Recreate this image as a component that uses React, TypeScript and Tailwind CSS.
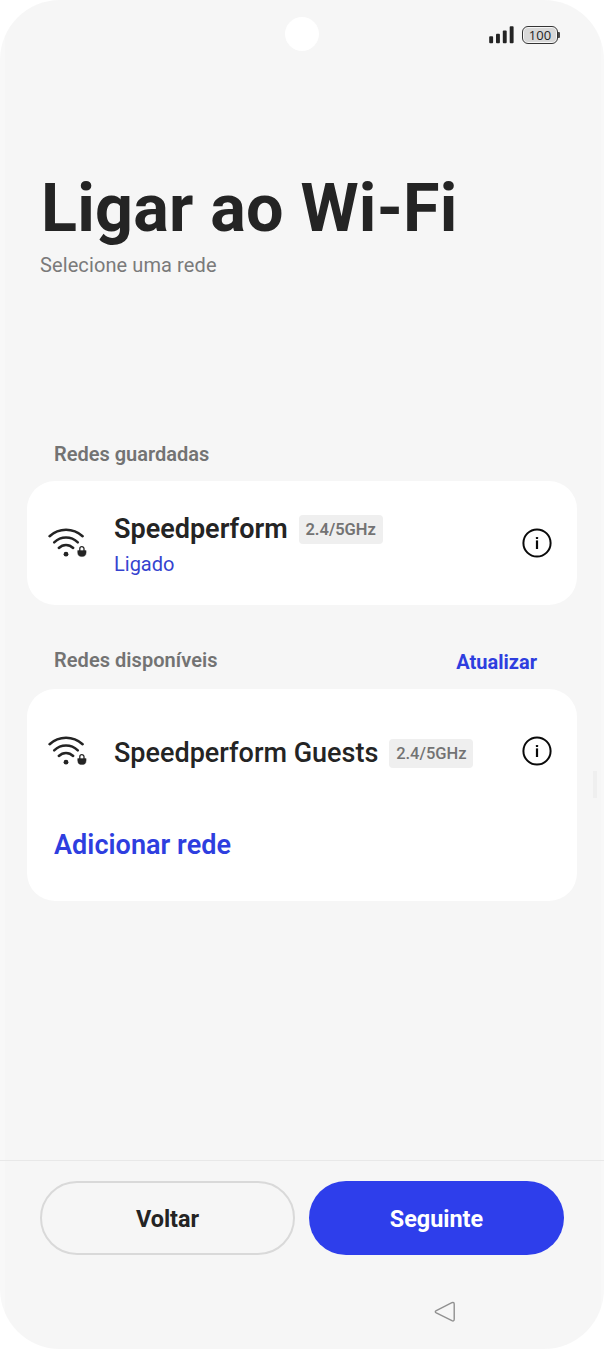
import type { ReactNode } from "react";

function StatusBar() {
  return (
    <header className="flex h-[70px] shrink-0 items-start pt-[17px]">
      <div className="ml-[285px] size-[34px] rounded-full bg-white" />
      <svg className="ml-[170px] mt-[9px] h-[18px] w-[25px]" viewBox="0 0 25 18" fill="#242424">
        <rect x="0.2" y="10.2" width="3.9" height="7" rx="0.9" />
        <rect x="7" y="7.8" width="3.9" height="9.4" rx="0.9" />
        <rect x="13.8" y="4.6" width="3.9" height="12.6" rx="0.9" />
        <rect x="20.7" y="0.2" width="3.9" height="17" rx="0.9" />
      </svg>
      <div className="ml-[8px] mt-[9px] flex items-center">
        <div className="flex h-[18px] w-[36px] items-center justify-center rounded-[6px] border-[1.5px] border-[#333] p-px">
          <div className="flex h-full w-full items-center justify-center rounded-[4px] bg-[#d8d8d8] font-['Open_Sans',sans-serif] text-[13px] leading-none font-medium">
            100
          </div>
        </div>
        <div className="h-[6px] w-[2px] rounded-r-[1px] bg-[#4a4a4a]" />
      </div>
    </header>
  );
}

function WifiLockIcon() {
  return (
    <svg className="mb-[2px] h-[34px] w-[40px] shrink-0" viewBox="48 525 40 34" fill="none">
      <g stroke="#242424" strokeWidth="2.5" strokeLinecap="round">
        <path d="M49.6 536.2C59 527.7 73 527.7 82.6 536.2" />
        <path d="M54.2 542.3C61 535.9 71 535.9 77.8 542.3" />
        <path d="M58.8 548C63 544 69 544 73.2 548" />
      </g>
      <circle cx="66" cy="554.2" r="2.4" fill="#242424" />
      <path d="M79.8 551v-2.2a2.1 2.1 0 0 1 4.2 0v2.2" stroke="#242424" strokeWidth="1.3" />
      <path d="M77.7 550.6H86.1V552.6A4.2 4 0 0 1 77.7 552.6Z" fill="#242424" stroke="#242424" strokeWidth="0.4" strokeLinejoin="round" />
    </svg>
  );
}

function InfoIcon() {
  return (
    <svg className="size-[30px] shrink-0" viewBox="0 0 30 30" fill="none">
      <circle cx="15" cy="15" r="13.6" stroke="#0a0a0a" strokeWidth="2" />
      <rect x="13.9" y="9.1" width="2.2" height="2" rx="0.4" fill="#0a0a0a" />
      <rect x="13.9" y="12.4" width="2.2" height="8.6" fill="#0a0a0a" />
    </svg>
  );
}

function Network({ name, status }: { name: string; status?: ReactNode }) {
  return (
    <div className="flex items-center pr-[25px] pl-[21px]">
      <WifiLockIcon />
      <div className={status ? "ml-[26px] flex-1 pt-[6px]" : "ml-[26px] flex-1 pt-[4px]"}>
        <div className="flex items-center gap-[11px]">
          {name}
          <span
            className={
              status
                ? "mt-px flex h-[29px] w-[84px] items-center justify-center rounded-[4px] bg-[#efefef] pt-px text-[16.5px] leading-none font-semibold text-[#737373]"
                : "mt-px flex h-[29px] w-[84px] items-center justify-center rounded-[4px] bg-[#efefef] pt-px text-[16.5px] leading-none font-medium text-[#737373]"
            }
          >
            2.4/5GHz
          </span>
        </div>
        {status}
      </div>
      <InfoIcon />
    </div>
  );
}

export default function App() {
  return (
    <div className="h-[1349px] w-[604px] bg-white font-['Roboto',sans-serif] whitespace-nowrap text-[#242424]">
      <div className="flex h-full flex-col overflow-hidden rounded-[60px] bg-[linear-gradient(90deg,#f8f8f8_5px,#f6f6f6_5px,#f6f6f6_601px,#f8f8f8_601px)]">
        <div className="flex h-[1160px] shrink-0 flex-col">
          <StatusBar />
          <h1 className="mt-[98px] ml-[41px] text-[66.5px] leading-[80px] font-bold tracking-[0.2px]">Ligar ao Wi-Fi</h1>
          <p className="mt-[5px] ml-[40px] text-[20px] leading-[24px] tracking-[0.1px] text-[#7a7a7a]">Selecione uma rede</p>

          <h2 className="mt-[165px] ml-[54px] text-[20px] leading-[24px] font-semibold text-[#737373]">Redes guardadas</h2>
          <section className="mx-[27px] mt-[15px] flex h-[124px] flex-col justify-center rounded-[28px] bg-white text-[27px] leading-[36px] font-semibold">
            <Network
              name="Speedperform"
              status={<p className="text-[20px] leading-[34px] font-normal text-[#3543cf]">Ligado</p>}
            />
          </section>

          <div className="mt-[43px] mr-[67px] ml-[54px] flex justify-between text-[20px] leading-[24px] font-semibold">
            <h2 className="tracking-[0.05px] text-[#737373]">Redes disponíveis</h2>
            <button className="mt-[2px] font-bold text-[#2e3edf]">Atualizar</button>
          </div>
          <section className="mx-[27px] mt-[15px] h-[212px] rounded-[28px] bg-white pt-[42px] text-[27px] leading-[36px] font-medium">
            <Network name="Speedperform Guests" />
            <button className="mt-[56px] ml-[27px] font-semibold tracking-[0.05px] text-[#2e3edf]">Adicionar rede</button>
          </section>
        </div>

        <footer className="flex-1 border-t border-[#e8e8e8] px-[40px] pt-[20px]">
          <div className="grid grid-cols-2 gap-[14px] text-[23.4px] font-bold">
            <button className="h-[74px] rounded-full border-2 border-[#d9d9d9] pt-[4px]">Voltar</button>
            <button className="h-[74px] rounded-full bg-[#2e3eeb] pt-[4px] text-white">Seguinte</button>
          </div>
          <svg className="mt-[46px] ml-[394px] h-[22px] w-[22px]" viewBox="0 0 22 22" fill="none">
            <path
              d="M2.3 9.6L17.9 1.7Q20.2 .8 20.2 3.2V18.2Q20.2 20.6 17.9 19.7L2.3 11.8Q.3 10.7 2.3 9.6Z"
              stroke="#909090"
              strokeWidth="1.4"
            />
          </svg>
        </footer>
      </div>
      <div className="absolute top-[771px] left-[593px] h-[27px] w-[4px] bg-[#efefef]" />
    </div>
  );
}
